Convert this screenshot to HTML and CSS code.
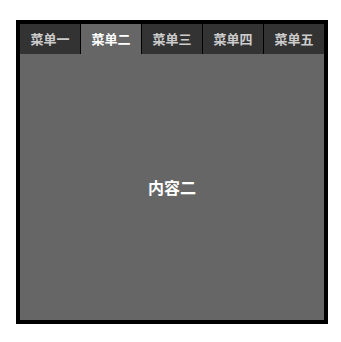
FILE: index.html
```html
<!DOCTYPE html>
<html lang="zh-CN">
<head>
  <meta charset="UTF-8" />
  <meta name="viewport" content="width=device-width, initial-scale=1.0" />
  <title>选项卡</title>
  <link rel="stylesheet" href="styles.css">
</head>
<body>
  <div class="tabs">
    <ul class="menu">
      <li>菜单一</li>
      <li class="active">菜单二</li>
      <li>菜单三</li>
      <li>菜单四</li>
      <li>菜单五</li>
    </ul>
    <div class="content">内容二</div>
  </div>
</body>
</html>
```

FILE: styles.css
```css
body {
  margin: 0;
  padding: 20px 0 0 16px;
  background: #fff;
  font-family: "Noto Sans CJK SC", "DejaVu Sans", sans-serif;
}
.tabs {
  width: 304px;
  border: 4px solid #000;
  background: #000;
}
.menu {
  display: flex;
  margin: 0;
  padding: 0;
  list-style: none;
  gap: 1px;
}
.menu li {
  width: 60px;
  height: 30px;
  line-height: 30px;
  text-align: center;
  font-size: 13px;
  font-weight: bold;
  color: #ccc;
  background: #333;
}
.menu li.active {
  color: #fff;
  background: #666;
}
.content {
  height: 266px;
  display: flex;
  align-items: center;
  justify-content: center;
  background: #666;
  color: #fff;
  font-size: 16px;
  font-weight: bold;
}
```
